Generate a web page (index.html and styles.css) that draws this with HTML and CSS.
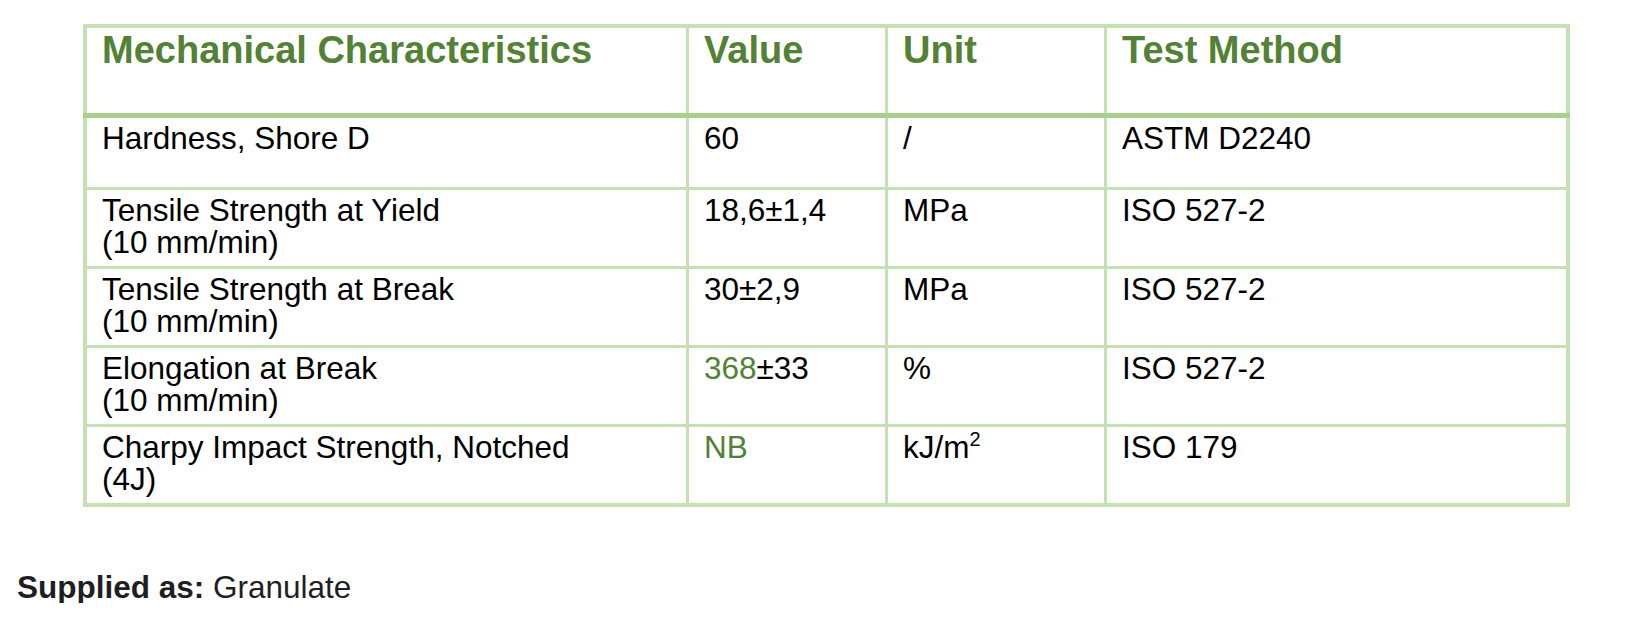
FILE: index.html
```html
<!DOCTYPE html>
<html>
<head>
<meta charset="utf-8">
<link rel="stylesheet" href="styles.css">
</head>
<body>
<div class="sheet">
  <div class="row head">
    <div class="cell">Mechanical Characteristics</div>
    <div class="cell">Value</div>
    <div class="cell">Unit</div>
    <div class="cell">Test Method</div>
  </div>
  <div class="row short">
    <div class="cell">Hardness, Shore D</div>
    <div class="cell">60</div>
    <div class="cell">/</div>
    <div class="cell">ASTM D2240</div>
  </div>
  <div class="row tall">
    <div class="cell">Tensile Strength at Yield<br>(10 mm/min)</div>
    <div class="cell">18,6±1,4</div>
    <div class="cell">MPa</div>
    <div class="cell">ISO 527-2</div>
  </div>
  <div class="row tall">
    <div class="cell">Tensile Strength at Break<br>(10 mm/min)</div>
    <div class="cell">30±2,9</div>
    <div class="cell">MPa</div>
    <div class="cell">ISO 527-2</div>
  </div>
  <div class="row mid">
    <div class="cell">Elongation at Break<br>(10 mm/min)</div>
    <div class="cell"><span class="green">368</span>±33</div>
    <div class="cell">%</div>
    <div class="cell">ISO 527-2</div>
  </div>
  <div class="row mid">
    <div class="cell">Charpy Impact Strength, Notched<br>(4J)</div>
    <div class="cell"><span class="green">NB</span></div>
    <div class="cell">kJ/m<sup class="sup">2</sup></div>
    <div class="cell">ISO 179</div>
  </div>
</div>
<p class="supplied"><b class="label">Supplied as:</b> Granulate</p>
</body>
</html>
```

FILE: styles.css
```css
html, body {
  margin: 0;
  padding: 0;
  background: #ffffff;
}
body {
  font-family: "Liberation Sans", Arial, sans-serif;
  color: #000000;
  font-size: 31.5px;
  line-height: 32px;
}
.sheet {
  margin: 24px 0 0 83px;
  width: 1479px;
  border: 4px solid #c5e0b3;
  background: #c5e0b3;
  display: flex;
  flex-direction: column;
}
.row {
  display: grid;
  grid-template-columns: 599px 196px 216px 459px;
  column-gap: 3px;
  margin-top: 3px;
}
.cell {
  background: #ffffff;
  padding: 3.5px 15px 0 15px;
  white-space: nowrap;
}
.head {
  margin: 0 -4px;
  padding: 0 4px;
  height: 85px;
  border-bottom: 5px solid #a8d08d;
}
.head .cell {
  font-weight: bold;
  font-size: 38px;
  line-height: 42px;
  padding-top: 1px;
  color: #538135;
}
.head + .row {
  margin-top: 0;
}
.short { height: 69px; }
.tall { height: 76px; }
.mid { height: 76px; }
.green { color: #538135; }
.sup {
  font-size: 20px;
  line-height: 0;
  vertical-align: 12px;
}
.supplied {
  margin: 64px 0 0 17px;
  color: #1f1f1f;
}
.label { font-weight: bold; }
```
